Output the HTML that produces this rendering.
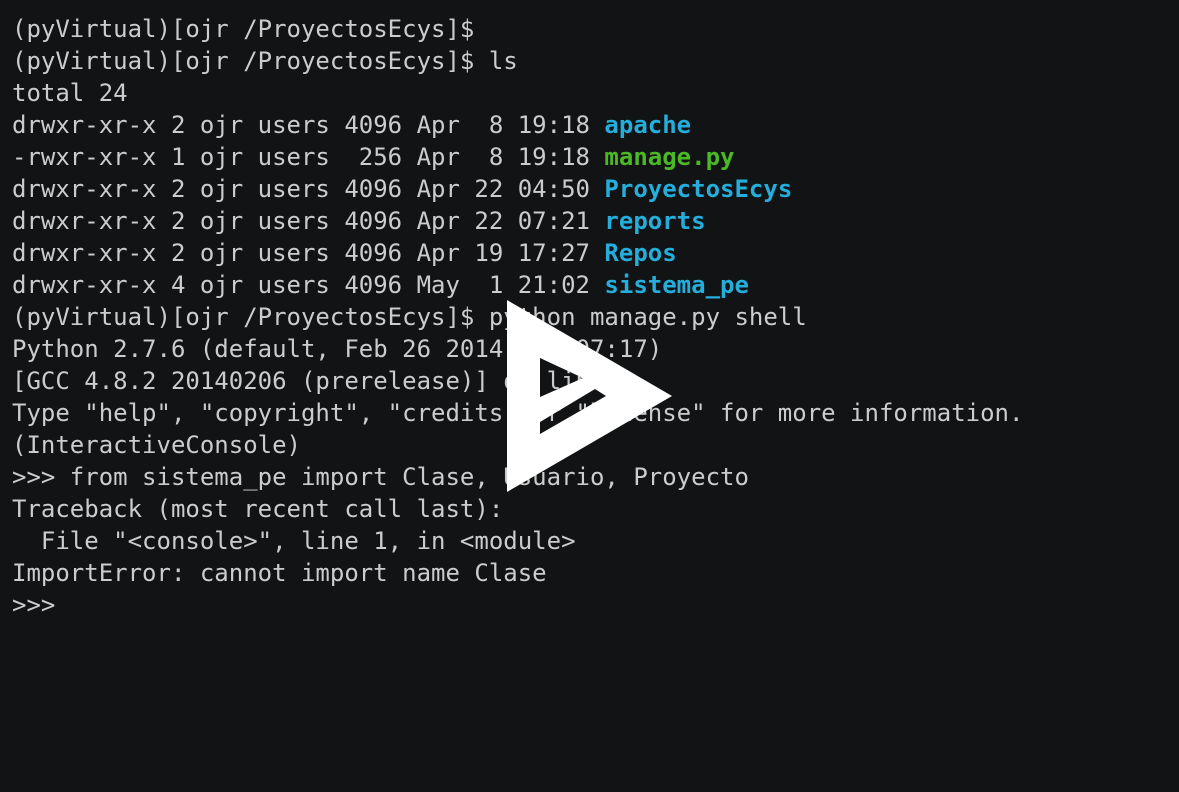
<!DOCTYPE html>
<html><head><meta charset="utf-8"><style>
html,body{margin:0;padding:0;background:#111315;width:1179px;height:792px;overflow:hidden}
pre{margin:0;position:absolute;left:12px;top:13px;font-family:"DejaVu Sans Mono","Liberation Mono",monospace;font-size:24px;line-height:32px;color:#cccccc}
.b{color:#25aedb;font-weight:bold}
.g{color:#4cb825;font-weight:bold}
svg{position:absolute;left:0;top:0}
</style></head><body>
<pre>(pyVirtual)[ojr /ProyectosEcys]$
(pyVirtual)[ojr /ProyectosEcys]$ ls
total 24
drwxr-xr-x 2 ojr users 4096 Apr  8 19:18 <span class="b">apache</span>
-rwxr-xr-x 1 ojr users  256 Apr  8 19:18 <span class="g">manage.py</span>
drwxr-xr-x 2 ojr users 4096 Apr 22 04:50 <span class="b">ProyectosEcys</span>
drwxr-xr-x 2 ojr users 4096 Apr 22 07:21 <span class="b">reports</span>
drwxr-xr-x 2 ojr users 4096 Apr 19 17:27 <span class="b">Repos</span>
drwxr-xr-x 4 ojr users 4096 May  1 21:02 <span class="b">sistema_pe</span>
(pyVirtual)[ojr /ProyectosEcys]$ python manage.py shell
Python 2.7.6 (default, Feb 26 2014, 12:07:17)
[GCC 4.8.2 20140206 (prerelease)] on linux2
Type "help", "copyright", "credits" or "license" for more information.
(InteractiveConsole)
&gt;&gt;&gt; from sistema_pe import Clase, Usuario, Proyecto
Traceback (most recent call last):
  File "&lt;console&gt;", line 1, in &lt;module&gt;
ImportError: cannot import name Clase
&gt;&gt;&gt;</pre>
<svg width="1179" height="792"><path fill="#fff" fill-rule="evenodd" d="M507 300 L672 396 L507 492 Z M540 358 L540 397 L583 378 Z M540 422 L595 389 L606 396 L540 434 Z"/></svg>
</body></html>
